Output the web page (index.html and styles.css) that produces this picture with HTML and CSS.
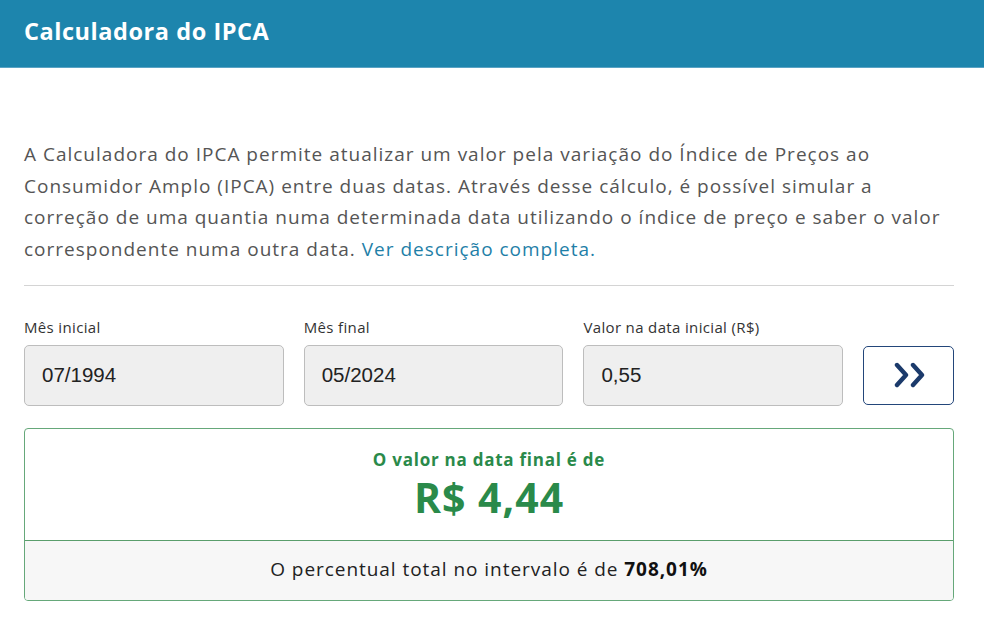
FILE: index.html
```html
<!DOCTYPE html>
<html lang="pt-BR">
<head>
<meta charset="utf-8">
<title>Calculadora do IPCA</title>
<link rel="stylesheet" href="styles.css">
</head>
<body>
<header class="topbar"><h1 class="title">Calculadora do IPCA</h1></header>
<main class="content">
  <p class="intro">A Calculadora do IPCA permite atualizar um valor pela variação do Índice de Preços ao<br>Consumidor Amplo (IPCA) entre duas datas. Através desse cálculo, é possível simular a<br>correção de uma quantia numa determinada data utilizando o índice de preço e saber o valor<br>correspondente numa outra data. <a class="link" href="#">Ver descrição completa.</a></p>
  <hr class="divider">
  <form class="form">
    <label class="field"><span class="label">Mês inicial</span><span class="input">07/1994</span></label>
    <label class="field"><span class="label">Mês final</span><span class="input">05/2024</span></label>
    <label class="field"><span class="label">Valor na data inicial (R$)</span><span class="input">0,55</span></label>
    <button type="button" class="go"><svg width="40" height="26" viewBox="0 0 40 26"><path d="M5 3 L14 13 L5 23 M21 3 L30 13 L21 23" fill="none" stroke="#1b3a6b" stroke-width="4.4" stroke-linecap="round" stroke-linejoin="round"/></svg></button>
  </form>
  <section class="result">
    <div class="result-top">
      <div class="result-caption">O valor na data final é de</div>
      <div class="result-value">R$ 4,44</div>
    </div>
    <div class="result-bottom"><span>O percentual total no intervalo é de <b>708,01%</b></span></div>
  </section>
</main>
</body>
</html>
```
FILE: styles.css
```css
* { box-sizing: border-box; }
html, body { margin: 0; padding: 0; background: #fff; }
body { font-family: "Open Sans", "Noto Sans", sans-serif; color: #555; width: 984px; height: 620px; overflow: hidden; }
.topbar { background: #1d85ad; height: 68px; display: flex; align-items: center; padding-left: 24px; border-bottom: 1px solid #5aa3c4; }
.title { margin: 0; color: #fff; font-size: 23.5px; font-weight: 700; letter-spacing: 0.55px; line-height: 1; padding-bottom: 3px; }
.content { padding: 0 30px 0 24px; }
.intro { margin: 71px 0 0; font-size: 19px; letter-spacing: 1px; line-height: 31.7px; color: #555; white-space: nowrap; }
.link { color: #1f7fa8; text-decoration: none; }
.divider { margin: 19px 0 0; border: 0; border-top: 1px solid #d4d4d4; }
.form { display: flex; gap: 20px; align-items: flex-end; margin-top: 31px; }
.field { display: flex; flex-direction: column; width: 260px; }
.label { font-size: 15px; letter-spacing: 0.35px; color: #333; line-height: 20px; margin-bottom: 8px; }
.input { height: 61px; background: #efefef; border: 1px solid #bdbdbd; border-radius: 5px; display: flex; align-items: center; padding-left: 17px; font-family: "Liberation Sans", Arial, sans-serif; font-size: 20.5px; color: #222; }
.go { width: 91px; height: 59px; margin-bottom: 1px; background: #fff; border: 1.5px solid #23467a; border-radius: 5px; display: flex; align-items: center; justify-content: center; padding: 0; }
.go svg { margin-left: 6px; }
.result { margin-top: 22px; border: 1.5px solid #66a87a; border-radius: 4px; overflow: hidden; }
.result-top { height: 111px; display: flex; flex-direction: column; align-items: center; padding-top: 20px; color: #2a8a4a; }
.result-caption { font-size: 17px; letter-spacing: 0.75px; font-weight: 700; line-height: 22px; }
.result-value { font-size: 41px; letter-spacing: 1px; font-weight: 700; line-height: 42px; margin-top: 5px; }
.result-bottom { height: 60px; background: #f7f7f7; border-top: 1.5px solid #5a9e6c; display: flex; align-items: center; justify-content: center; font-size: 19px; letter-spacing: 0.95px; color: #222; padding-bottom: 2px; }
.result-bottom b { font-weight: 700; color: #111; }
```
